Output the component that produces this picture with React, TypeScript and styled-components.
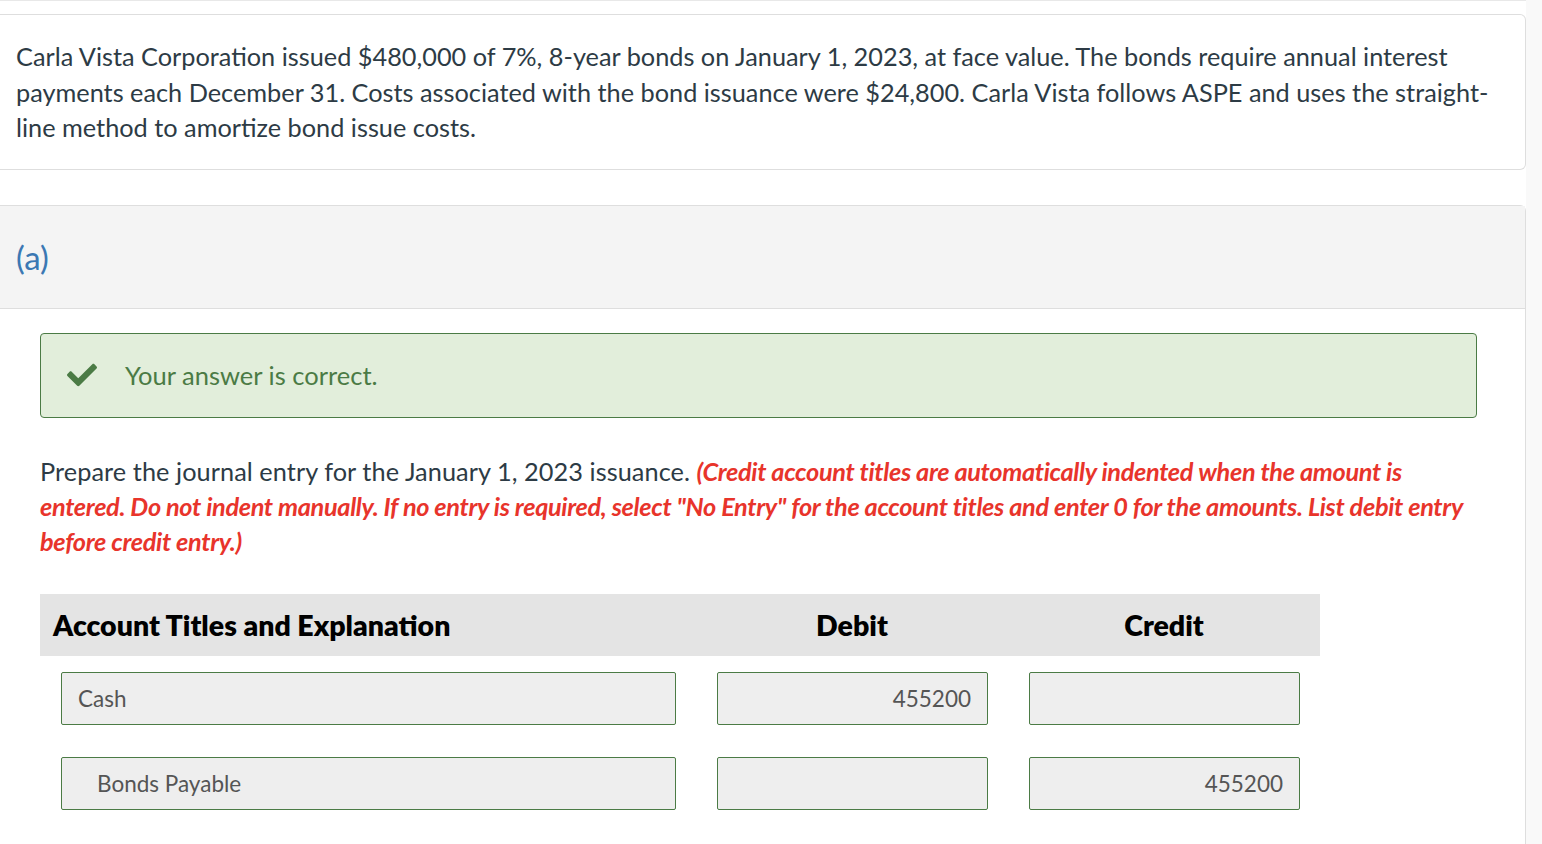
import React from 'react';
import styled, { createGlobalStyle } from 'styled-components';
import { FaCheck } from 'react-icons/fa';

const GlobalStyle = createGlobalStyle`
  body {
    margin: 0;
    background: #ffffff;
    font-family: Lato, "Open Sans", sans-serif;
    color: #2d3b45;
  }
`;

const Page = styled.div`
  display: flex;
  min-height: 844px;
`;

const Main = styled.div`
  width: 1526px;
  border-top: 1px solid #e8e8e8;
  display: flex;
  flex-direction: column;
`;

const Rail = styled.div`
  flex: 1;
  background: #f9f9f9;
`;

const QuestionCard = styled.div`
  margin-top: 13px;
  border: 1px solid #dedede;
  border-left: none;
  border-radius: 0 6px 6px 0;
  padding: 24px 24px 23px 16px;
  font-size: 25.3px;
  line-height: 35.5px;
`;

const Part = styled.section`
  margin-top: 35px;
  border-top: 1px solid #dedede;
  border-right: 1px solid #dedede;
  border-top-right-radius: 6px;
  flex: 1;
`;

const PartHeader = styled.div`
  background: #f4f4f4;
  border-bottom: 1px solid #dedede;
  height: 102px;
  display: flex;
  align-items: center;
  padding-left: 16px;
  font-size: 33px;
  color: #3b78b3;
`;

const PartBody = styled.div`
  padding: 24px 48px 0 40px;
`;

const Feedback = styled.div`
  display: flex;
  align-items: center;
  height: 83px;
  background: #e2eedb;
  border: 1px solid #4b7b45;
  border-radius: 4px;
  padding-left: 26px;
  gap: 28px;
  color: #4b7b45;
  font-size: 25.5px;
`;

const Instructions = styled.p`
  margin: 36px 0 0;
  font-size: 25.3px;
  line-height: 35px;
  letter-spacing: 0.06px;
`;

const Note = styled.em`
  color: #e8342b;
  font-weight: 700;
  letter-spacing: -0.33px;
`;

const Table = styled.div`
  margin-top: 35px;
  width: 1280px;
  display: grid;
  grid-template-columns: 656px 312px 312px;
`;

const HeadCell = styled.div<{ $center?: boolean }>`
  background: #e4e4e4;
  height: 62px;
  display: flex;
  align-items: center;
  justify-content: ${(p) => (p.$center ? 'center' : 'flex-start')};
  padding-left: ${(p) => (p.$center ? '0' : '13px')};
  font-size: 28.5px;
  font-weight: 800;
  color: #000;
`;

const Cell = styled.div`
  padding: 16px 20px 16px 21px;
`;

const Field = styled.div<{ $right?: boolean; $indent?: boolean }>`
  height: 51px;
  background: #eeeeee;
  border: 1px solid #4b7b45;
  border-radius: 2px;
  display: flex;
  align-items: center;
  justify-content: ${(p) => (p.$right ? 'flex-end' : 'flex-start')};
  padding: 0 16px 0 ${(p) => (p.$indent ? '35px' : '16px')};
  font-size: 22.5px;
  color: #555;
`;

const rows = [
  { account: 'Cash', debit: '455200', credit: '', indent: false },
  { account: 'Bonds Payable', debit: '', credit: '455200', indent: true },
];

export default function App() {
  return (
    <Page>
      <GlobalStyle />
      <Main>
        <QuestionCard>
          Carla Vista Corporation issued $480,000 of 7%, 8-year bonds on January 1, 2023, at face value. The bonds require annual interest payments each December 31. Costs associated with the bond issuance were $24,800. Carla Vista follows ASPE and uses the straight-line method to amortize bond issue costs.
        </QuestionCard>
        <Part>
          <PartHeader>(a)</PartHeader>
          <PartBody>
            <Feedback>
              <FaCheck size={30} />
              <span>Your answer is correct.</span>
            </Feedback>
            <Instructions>
              Prepare the journal entry for the January 1, 2023 issuance.{' '}
              <Note>
                (Credit account titles are automatically indented when the amount is entered. Do not indent manually. If no entry is required, select "No Entry" for the account titles and enter 0 for the amounts. List debit entry before credit entry.)
              </Note>
            </Instructions>
            <Table>
              <HeadCell>Account Titles and Explanation</HeadCell>
              <HeadCell $center>Debit</HeadCell>
              <HeadCell $center>Credit</HeadCell>
              {rows.map((r) => (
                <React.Fragment key={r.account}>
                  <Cell>
                    <Field $indent={r.indent}>{r.account}</Field>
                  </Cell>
                  <Cell>
                    <Field $right>{r.debit}</Field>
                  </Cell>
                  <Cell>
                    <Field $right>{r.credit}</Field>
                  </Cell>
                </React.Fragment>
              ))}
            </Table>
          </PartBody>
        </Part>
      </Main>
      <Rail />
    </Page>
  );
}
